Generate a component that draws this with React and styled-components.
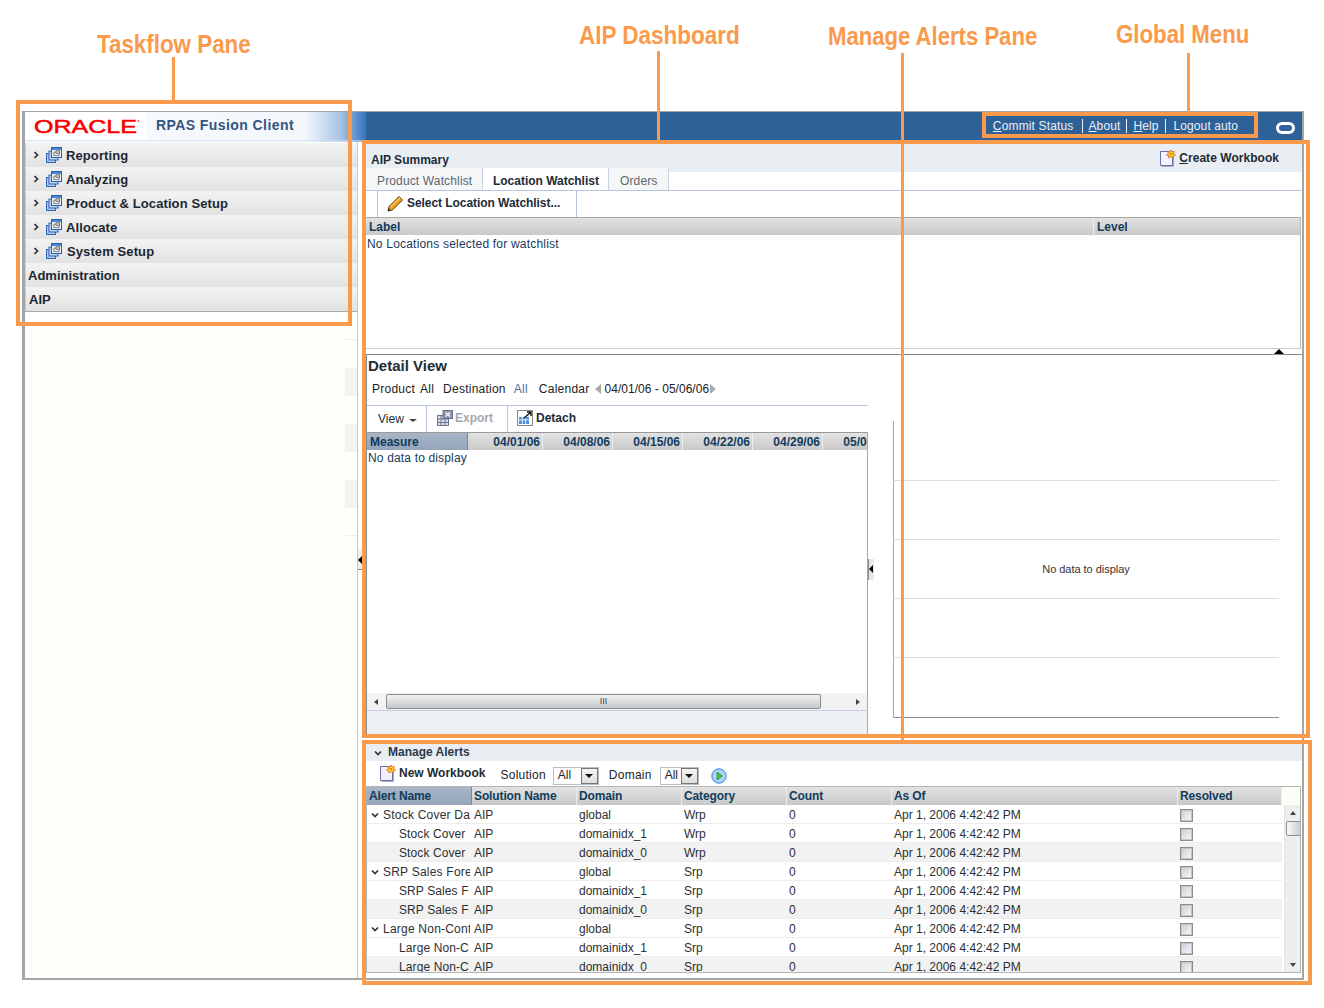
import React from 'react'
import styled, { createGlobalStyle } from 'styled-components'

const ORANGE = '#f99a4c'
const COLS = '105px 105px 105px 105px 105px 286px 104px'

const Global = createGlobalStyle`
  html, body { margin: 0; background: #fff; }
  body { font: 12px/1.2 "Liberation Sans", Arial, sans-serif; color: #222; }
  * { box-sizing: border-box; }
`

const Stage = styled.div`
  position: relative;
  width: 1324px;
  height: 1008px;
  padding: 111px 20px 0 22px;
  overflow: hidden;
`

const AppWindow = styled.div`
  width: 1282px;
  height: 869px;
  border-style: solid;
  border-width: 1px 2px 2px 3px;
  border-color: #9fa3a8 #a5a5a5 #a5a5a5 #a3a5aa;
  display: flex;
  flex-direction: column;
`

const Banner = styled.header`
  height: 30px;
  flex: none;
  display: flex;
  align-items: center;
  background: #2d6197;
`

const Brand = styled.div`
  width: 341px;
  height: 100%;
  flex: none;
  display: flex;
  align-items: center;
  background: linear-gradient(90deg, #fff 0, #fff 121px, #f6f9fd 122px, #f3f7fc 280px, #a9c5e4 315px, #3474bd 341px);
  box-shadow: inset 0 -2px 0 rgba(214, 228, 245, .6);
`

const LogoSvg = styled.svg`
  margin-left: 9px;
  margin-top: -3px;
  width: 106px;
  height: 18px;
  flex: none;
`

const AppName = styled.div`
  margin-left: 16px;
  margin-top: -3px;
  font-size: 14px;
  font-weight: bold;
  letter-spacing: .42px;
  color: #33557f;
`

const GlobalLinks = styled.nav`
  margin-left: auto;
  display: flex;
  align-items: center;
  color: #eaf0f6;
  font-size: 12px;
  margin-top: -3px;
`

const GlobalLink = styled.span`
  padding: 0 ${p => p.$right || 7}px 0 ${p => p.$left || 7}px;
  line-height: 14px;
  border-left: ${p => (p.$first ? 'none' : '1px solid #eef3f8')};
  letter-spacing: ${p => (p.$first ? '.15px' : '.1px')};
  u { text-decoration: underline; }
`

const Ring = styled.span`
  width: 19px;
  height: 12px;
  margin: 1px 7px 0 31px;
  border: 3px solid #fff;
  border-radius: 6px;
  flex: none;
`

const Body = styled.div`
  flex: 1;
  min-height: 0;
  display: flex;
`

const Taskflow = styled.aside`
  width: 333px;
  flex: none;
  display: flex;
  flex-direction: column;
  padding-top: 1px;
  border-right: 1px solid #c9c9c9;
`

const NavRow = styled.div`
  height: 24px;
  flex: none;
  display: flex;
  align-items: center;
  padding: 2px 0 0 ${p => p.$inset || 7}px;
  background: linear-gradient(#f3f3f3, #e2e2e2);
  font-size: 13px;
  font-weight: bold;
  color: #1c2733;
  box-shadow: inset 1px 0 0 #d0d0d0;
`

const NavChevron = styled.span`
  display: flex;
  margin-top: -3px;
`

const NavIcon = styled.span`
  display: flex;
  margin: -2px 0 0 6px;
`

const NavLabel = styled.span`
  margin-left: ${p => p.$gap || 4}px;
  letter-spacing: .1px;
`

const NavFill = styled.div`
  flex: 1;
  border-top: 1px solid #aaa;
  padding-top: 10px;
  background: #fff;
`

const Cream = styled.div`
  height: 100%;
  background:
    linear-gradient(#fff 0 17px, #eee 17px 18px, #fff 18px 46px, #f3f3f3 46px 74px, #fff 74px 102px, #f3f3f3 102px 130px, #fff 130px 158px, #f3f3f3 158px 186px, #fff 186px 213px, #eee 213px 214px) right top / 12px 214px no-repeat,
    #fdfef9;
`

const SplitStrip = styled.div`
  width: 8px;
  flex: none;
  position: relative;
`

const SplitHandle = styled.span`
  position: absolute;
  left: 0;
  top: 407px;
  width: 4px;
  height: 21px;
  background: #eee;
  border-bottom: 1px solid #888;
  &::after {
    content: '';
    position: absolute;
    left: 0;
    top: 7px;
    border: 4px solid transparent;
    border-left-width: 0;
    border-right: 4px solid #000;
  }
`

const Main = styled.main`
  flex: 1;
  min-width: 0;
  display: flex;
  flex-direction: column;
  padding-top: 1px;
`

const SummaryHead = styled.div`
  height: 25px;
  flex: none;
  display: flex;
  align-items: flex-end;
  justify-content: space-between;
  padding: 0 23px 1px 5px;
  background: #e9eef3;
  font-weight: bold;
  color: #222b36;
`

const SummaryAction = styled.span`
  display: flex;
  align-items: center;
  gap: 3px;
  letter-spacing: .04px;
  u { text-decoration: underline; }
`

const Tabs = styled.div`
  height: 23px;
  flex: none;
  display: flex;
  padding-right: 1px;
  border-bottom: 1px solid #b9c5dc;
  background: linear-gradient(#e9eef3 4px, #fff 4px);
`

const Tab = styled.span`
  width: ${p => p.$w}px;
  padding-left: ${p => p.$pad}px;
  line-height: 26px;
  border-right: 1px solid #c9d3e2;
  background: ${p => (p.$active ? '#fff' : '#f5f6f7')};
  color: ${p => (p.$active ? '#222b36' : '#5d6670')};
  font-weight: ${p => (p.$active ? 'bold' : 'normal')};
  letter-spacing: ${p => (p.$active ? '-.02px' : '.14px')};
`

const SubBar = styled.div`
  height: 26px;
  flex: none;
  padding-left: 11px;
  display: flex;
`

const SubButton = styled.span`
  width: 200px;
  display: flex;
  align-items: center;
  gap: 3px;
  padding: 0 0 2px 9px;
  border: solid #b9c5dc;
  border-width: 0 1px;
  font-weight: bold;
  letter-spacing: -.06px;
  color: #222b36;
`

const WatchTable = styled.section`
  height: 132px;
  flex: none;
  margin-right: 1px;
  border: 1px solid #aaa;
  border-width: 1px 1px 1px 0;
  border-color: #a8a8a8 #bbb #ccc #bbb;
  display: flex;
  flex-direction: column;
`

const WatchHead = styled.div`
  height: 17px;
  display: grid;
  grid-template-columns: 727px 1fr;
  background: linear-gradient(#e2e2e2, #c9c9c9);
  font-weight: bold;
  color: #123c5c;
  line-height: 18px;
`

const WatchCell = styled.span`
  padding-left: 3px;
  border-left: ${p => (p.$rule ? '1px solid #eee' : 'none')};
`

const EmptyNote = styled.div`
  padding-left: 1px;
  line-height: 18px;
  color: #203a5a;
  letter-spacing: .2px;
`

const Splitter = styled.div`
  height: 6px;
  flex: none;
  position: relative;
  border-bottom: 1px solid #8a8a8a;
  &::after {
    content: '';
    position: absolute;
    right: 18px;
    top: 0;
    border: 5px solid transparent;
    border-top-width: 0;
    border-bottom: 5px solid #000;
  }
`

const Detail = styled.section`
  height: 380px;
  flex: none;
  display: flex;
  border-left: 1px solid #8a8a8a;
  position: relative;
`

const DetailLeft = styled.div`
  width: 501px;
  flex: none;
  display: flex;
  flex-direction: column;
`

const DetailTitle = styled.h2`
  height: 22px;
  margin: 0;
  padding: 2px 0 0 1px;
  font-size: 15px;
  font-weight: bold;
  color: #222b36;
`

const Filters = styled.div`
  height: 28px;
  display: flex;
  align-items: center;
  padding: 0 0 4px 5px;
  letter-spacing: .24px;
`

const FilterValue = styled.span`
  margin: 0 ${p => p.$after || 10}px 0 ${p => p.$before || 5}px;
  color: ${p => (p.$muted ? '#4f6d98' : '#222')};
`

const DateRange = styled.span`
  letter-spacing: .03px;
`

const Pager = styled.span`
  width: 0;
  height: 0;
  border: 5px solid transparent;
  ${p => (p.$next ? 'border-left: 6px solid #aaa; border-right-width: 0;' : 'border-right: 6px solid #aaa; border-left-width: 0;')}
  margin: ${p => (p.$next ? '0 0 0 1px' : '0 3px 0 6px')};
`

const ViewBar = styled.div`
  height: 27px;
  display: flex;
  border-top: 1px solid #b9c5dc;
`

const ViewItem = styled.span`
  width: ${p => p.$w}px;
  display: flex;
  align-items: center;
  gap: ${p => p.$gap || 3}px;
  padding-left: ${p => p.$pad}px;
  padding-top: ${p => (p.$plain ? 1 : 0)}px;
  padding-bottom: ${p => (p.$plain ? 0 : 2)}px;
  border-right: ${p => (p.$rule ? '1px solid #b9c5dc' : 'none')};
  font-weight: ${p => (p.$plain ? 'normal' : 'bold')};
  color: ${p => (p.$off ? '#a3a7ad' : '#222b36')};
`

const Caret = styled.i`
  width: 0;
  height: 0;
  margin: 2px 0 0 2px;
  border: 3px solid transparent;
  border-top: 3px solid #444;
  border-bottom-width: 0;
  border-left-width: 4px;
  border-right-width: 4px;
`

const MeasureTable = styled.div`
  flex: 1;
  min-height: 0;
  display: flex;
  flex-direction: column;
  border-right: 1px solid #aaa;
  border-top: 1px solid #999;
  overflow: hidden;
`

const MeasureHead = styled.div`
  height: 17px;
  flex: none;
  display: flex;
  font-weight: bold;
  line-height: 18px;
  color: #123c5c;
`

const HeadCell = styled.span`
  flex: none;
  width: ${p => p.$w}px;
  padding: ${p => (p.$date ? '0 2px 0 0' : `0 0 0 ${p.$pad || 3}px`)};
  text-align: ${p => (p.$date ? 'right' : 'left')};
  white-space: nowrap;
  overflow: hidden;
  background: ${p => (p.$sorted ? 'linear-gradient(#a9b6c8, #94a4ba)' : 'linear-gradient(#e2e2e2, #c9c9c9)')};
  border-right: 1px solid ${p => (p.$sorted ? '#7d8796' : '#eee')};
`

const MeasureBody = styled.div`
  flex: 1;
  padding-left: 1px;
  line-height: 17px;
  color: #203a5a;
  letter-spacing: .16px;
`

const HScroll = styled.div`
  height: 17px;
  flex: none;
  display: flex;
  align-items: center;
  padding-left: 7px;
  background: #f2f2f2;
`

const ScrollArrow = styled.i`
  width: 0;
  height: 0;
  flex: none;
  border: 3px solid transparent;
  ${p => p.$dir === 'left' && 'border-right: 4px solid #444; border-left-width: 0;'}
  ${p => p.$dir === 'right' && 'border-left: 4px solid #444; border-right-width: 0;'}
  ${p => p.$dir === 'up' && 'border-bottom: 4px solid #444; border-top-width: 0;'}
  ${p => p.$dir === 'down' && 'border-top: 4px solid #444; border-bottom-width: 0;'}
`

const SelectArrow = styled.i`
  width: 0;
  height: 0;
  border: 4px solid transparent;
  border-top: 4px solid #111;
  border-bottom-width: 0;
`

const HThumb = styled.div`
  width: 435px;
  height: 15px;
  margin: 0 35px 0 8px;
  border: 1px solid #8e8e8e;
  border-radius: 2px;
  background: linear-gradient(#f2f2f2, #c4c8cc);
  color: #444;
  font-size: 9px;
  line-height: 12px;
  text-align: center;
`

const DetailFoot = styled.div`
  height: 25px;
  flex: none;
  background: #edf0f4;
  border-top: 1px solid #c6d0df;
  border-right: 1px solid #aaa;
`

const ChartArea = styled.div`
  width: 411px;
  margin-top: 66px;
  padding-left: 25px;
  height: 297px;
  display: grid;
  grid-template-rows: 60px 59px 59px 59px 60px;
`

const Band = styled.div`
  display: flex;
  align-items: center;
  justify-content: center;
  border-left: 1px solid #a6a6a6;
  border-bottom: 1px solid ${p => (p.$last ? '#8f8f9c' : '#dcdcdc')};
  padding: 1px 1px 0 0;
  font-size: 11px;
  letter-spacing: -.03px;
  color: #333;
`

const ChartHandle = styled.span`
  position: absolute;
  left: 501px;
  top: 204px;
  width: 6px;
  height: 21px;
  background: #e8e8e8;
  border-left: 1px solid #888;
  &::after {
    content: '';
    position: absolute;
    left: 0;
    top: 6px;
    border: 4px solid transparent;
    border-left-width: 0;
    border-right: 4px solid #000;
  }
`

const Gap = styled.div`
  height: 9px;
  flex: none;
`

const AlertsHead = styled.div`
  height: 17px;
  flex: none;
  display: flex;
  align-items: center;
  gap: 6px;
  padding-left: 8px;
  background: #e9eef3;
  font-weight: bold;
  color: #2a3a4c;
`

const AlertsBar = styled.div`
  height: 25px;
  flex: none;
  display: flex;
  align-items: center;
  padding: 4px 0 0 14px;
`

const BarAction = styled.span`
  display: flex;
  align-items: center;
  gap: 3px;
  font-weight: bold;
  color: #222b36;
  margin: -4px 15px 0 0;
`

const BarLabel = styled.span`
  margin-right: ${p => p.$after || 7}px;
  letter-spacing: .25px;
`

const Select = styled.span`
  width: ${p => p.$w}px;
  height: 18px;
  margin-right: ${p => p.$after}px;
  display: flex;
  align-items: center;
  justify-content: space-between;
  padding: 0 0 0 4px;
  border: 1px solid #b8bec7;
  background: #fff;
`

const SelectBtn = styled.span`
  width: 17px;
  height: 16px;
  display: flex;
  align-items: center;
  justify-content: center;
  background: linear-gradient(#f4f4f4, #dedede);
  border: 1px solid #777;
`

const AlertTable = styled.section`
  height: 187px;
  flex: none;
  margin-right: 1px;
  border: 1px solid #b5b5b5;
  display: flex;
  flex-direction: column;
  overflow: hidden;
`

const AlertHeadRow = styled.div`
  height: 18px;
  flex: none;
  display: flex;
  background: #fdfdf8;
`

const AlertHeadCells = styled.div`
  display: grid;
  grid-template-columns: ${COLS};
  font-weight: bold;
  line-height: 18px;
  color: #123c5c;
  letter-spacing: -.12px;
`

const AlertBody = styled.div`
  flex: 1;
  min-height: 0;
  display: flex;
`

const AlertRows = styled.div`
  width: 915px;
  flex: none;
  overflow: hidden;
`

const AlertRow = styled.div`
  height: 19px;
  padding-top: 2px;
  display: grid;
  grid-template-columns: ${COLS};
  align-items: center;
  border-bottom: 1px solid #ededed;
  background: ${p => (p.$shade ? '#f2f2f2' : '#fff')};
  color: #2b2f33;
`

const AlertCell = styled.span`
  padding-left: 2px;
  white-space: nowrap;
  overflow: hidden;
`

const NameCell = styled(AlertCell)`
  display: flex;
  align-items: center;
  padding-left: ${p => (p.$child ? 32 : 4)}px;
  margin-right: ${p => (p.$child ? 3 : 2)}px;
  overflow: hidden;
  letter-spacing: ${p => (p.$child ? '.1px' : '.22px')};
`

const NameText = styled.span`
  margin-left: ${p => (p.$parent ? 4 : 0)}px;
`

const Checkbox = styled.span`
  display: block;
  width: 13px;
  height: 13px;
  border: 1px solid #8c8c8c;
  box-shadow: inset 0 0 0 1px #c4c4c4;
  background: linear-gradient(135deg, #c8cdd6, #fafafa);
`

const VScroll = styled.div`
  width: 17px;
  margin-left: 2px;
  flex: none;
  display: flex;
  flex-direction: column;
  align-items: center;
  padding: 6px 0 5px;
  background: #eee;
  border-left: 1px solid #e4e4e4;
`

const VThumb = styled.span`
  width: 15px;
  height: 15px;
  margin-top: 6px;
  margin-bottom: auto;
  border: 1px solid #8e8e8e;
  border-radius: 2px;
  background: linear-gradient(90deg, #fafafa, #c9ccd1);
`

const Rule = styled.div`
  position: absolute;
  left: ${p => p.$x}px;
  top: ${p => p.$y}px;
  width: 3px;
  height: ${p => p.$h}px;
  background: ${ORANGE};
`

const Callout = styled.div`
  position: absolute;
  left: ${p => p.$x}px;
  top: ${p => p.$y}px;
  width: ${p => p.$w}px;
  height: ${p => p.$h}px;
  border: 4px solid ${ORANGE};
`

const CalloutLabel = styled.div`
  position: absolute;
  left: ${p => p.$x}px;
  top: ${p => p.$y}px;
  font-size: 26px;
  line-height: 30px;
  font-weight: bold;
  white-space: nowrap;
  color: ${ORANGE};
  transform: scaleX(${p => p.$sx});
  transform-origin: left center;
`

const Oracle = () => (
  <LogoSvg viewBox="0 0 106 18">
    <text x="0" y="15.5" fontFamily="Liberation Sans" fontSize="18" fill="#f80000" stroke="#f80000" strokeWidth=".5" textLength="103" lengthAdjust="spacingAndGlyphs">ORACLE</text>
    <circle cx="104.5" cy="4" r=".8" fill="#f80000" />
  </LogoSvg>
)

const Chevron = ({ open, size = 8 }) => (
  <svg width={size} height={size} viewBox="0 0 8 8" style={{ flex: 'none' }}>
    <path d={open ? 'M1 2.5 L4 5.5 L7 2.5' : 'M2.5 1 L5.5 4 L2.5 7'} fill="none" stroke="#333" strokeWidth="1.7" />
  </svg>
)

const StackIcon = () => (
  <svg width="16" height="16" viewBox="0 0 16 16" style={{ flex: 'none' }}>
    <rect x=".5" y="6.5" width="9" height="9" fill="#a9c8ef" stroke="#2f62b8" />
    <rect x="3" y="4" width="9" height="9" fill="#bcd4f2" stroke="#2f62b8" />
    <rect x="5.5" y=".5" width="10" height="10" fill="#e6eefa" stroke="#2f5ca8" />
    <rect x="6" y="1" width="9" height="2" fill="#4f86d4" />
    <rect x="8" y="5.2" width="5" height="3.4" fill="#fff" stroke="#666" strokeWidth=".8" />
    <rect x="10" y="3.8" width="3.6" height="2.6" fill="#ccc" stroke="#666" strokeWidth=".8" />
  </svg>
)

const DocStar = () => (
  <svg width="16" height="17" viewBox="0 0 16 17" style={{ flex: 'none' }}>
    <path d="M.5 1.5 H9 L12.5 5 V15.5 H.5 Z" fill="#f1f2fb" stroke="#6a70a6" />
    <path d="M1.5 16.5 H13.5 V6" fill="none" stroke="#a7adc9" />
    <path d="M11 0 L12 2 L14.4 1.4 L13.6 3.6 L15.5 5 L13.3 5.7 L13.2 8 L11 6.6 L8.8 8 L8.7 5.7 L6.5 5 L8.4 3.6 L7.6 1.4 L10 2 Z" fill="#ffd21f" stroke="#c9572a" strokeWidth=".7" />
    <circle cx="11" cy="4" r="1.1" fill="#e8641f" />
  </svg>
)

const Pencil = () => (
  <svg width="17" height="17" viewBox="0 0 17 17" style={{ flex: 'none' }}>
    <path d="M1 16 L2 11.5 L12 1.5 L15.5 5 L5.5 15 Z" fill="#ee9f1f" stroke="#5f4310" />
    <path d="M3.5 12 L13 3" stroke="#fde59a" />
    <path d="M1 16 L1.6 13.2 L3.8 15.4 Z" fill="#222" />
  </svg>
)

const ExportIcon = () => (
  <svg width="16" height="16" viewBox="0 0 16 16" style={{ flex: 'none' }}>
    <rect x=".5" y="5.5" width="11" height="10" fill="#dfe1ea" stroke="#6c7290" />
    <path d="M.5 9 H11.5 M.5 12.5 H11.5 M4 5.5 V15.5 M8 5.5 V15.5" stroke="#6c7290" />
    <rect x="6" y=".5" width="9.5" height="8" fill="#8c93ad" stroke="#6c7290" />
    <path d="M8.5 2.5 L13 6.5 M13 2.5 L8.5 6.5" stroke="#fff" strokeWidth="1.2" />
  </svg>
)

const DetachIcon = () => (
  <svg width="16" height="16" viewBox="0 0 16 16" style={{ flex: 'none' }}>
    <rect x=".5" y=".5" width="15" height="15" fill="#fff" stroke="#111" strokeDasharray="1 1" />
    <rect x="2" y="7" width="10" height="7" fill="#4e8fdc" />
    <path d="M2 10 H12 M5.3 7 V14 M8.6 7 V14" stroke="#d7e8fb" />
    <path d="M7 8 L13.5 2.5 M10 2 H14 V6" fill="none" stroke="#111" strokeWidth="1.4" />
  </svg>
)

const GoIcon = () => (
  <svg width="16" height="16" viewBox="0 0 16 16" style={{ flex: 'none' }}>
    <circle cx="8" cy="8" r="7.2" fill="#a9d3f5" stroke="#3d83d0" />
    <path d="M6 4 L11.5 8 L6 12 Z" fill="#55b84a" stroke="#2e8a36" strokeWidth=".7" />
  </svg>
)

const navItems = [
  { label: 'Reporting' },
  { label: 'Analyzing' },
  { label: 'Product & Location Setup' },
  { label: 'Allocate' },
  { label: 'System Setup', gap: 5 },
]

const dates = ['04/01/06', '04/08/06', '04/15/06', '04/22/06', '04/29/06', '05/06/06']

const alertHeads = ['Alert Name', 'Solution Name', 'Domain', 'Category', 'Count', 'As Of', 'Resolved']

const families = [
  ['Stock Cover Days', 'Wrp'],
  ['SRP Sales Forecast', 'Srp'],
  ['Large Non-Contiguous', 'Srp'],
]

const alerts = families.flatMap(([name, cat]) => [
  { name, cat, domain: 'global', parent: true },
  { name, cat, domain: 'domainidx_1' },
  { name, cat, domain: 'domainidx_0' },
])

export default function App() {
  return (
    <Stage>
      <Global />
      <AppWindow>
        <Banner>
          <Brand>
            <Oracle />
            <AppName>RPAS Fusion Client</AppName>
          </Brand>
          <GlobalLinks>
            <GlobalLink $first $right={8}><u>C</u>ommit Status</GlobalLink>
            <GlobalLink $left={6} $right={6}><u>A</u>bout</GlobalLink>
            <GlobalLink $left={6}><u>H</u>elp</GlobalLink>
            <GlobalLink>Lo<u>g</u>out auto</GlobalLink>
          </GlobalLinks>
          <Ring />
        </Banner>
        <Body>
          <Taskflow>
            {navItems.map(item => (
              <NavRow key={item.label}>
                <NavChevron><Chevron /></NavChevron>
                <NavIcon><StackIcon /></NavIcon>
                <NavLabel $gap={item.gap}>{item.label}</NavLabel>
              </NavRow>
            ))}
            <NavRow $inset={3}>Administration</NavRow>
            <NavRow $inset={4}>AIP</NavRow>
            <NavFill><Cream /></NavFill>
          </Taskflow>
          <SplitStrip><SplitHandle /></SplitStrip>
          <Main>
            <SummaryHead>
              <span>AIP Summary</span>
              <SummaryAction><DocStar /><span><u>C</u>reate Workbook</span></SummaryAction>
            </SummaryHead>
            <Tabs>
              <Tab $w={117} $pad={11}>Product Watchlist</Tab>
              <Tab $w={126} $pad={10} $active>Location Watchlist</Tab>
              <Tab $w={60} $pad={11}>Orders</Tab>
            </Tabs>
            <SubBar>
              <SubButton><Pencil />Select Location Watchlist...</SubButton>
            </SubBar>
            <WatchTable>
              <WatchHead>
                <WatchCell>Label</WatchCell>
                <WatchCell $rule>Level</WatchCell>
              </WatchHead>
              <EmptyNote>No Locations selected for watchlist</EmptyNote>
            </WatchTable>
            <Splitter />
            <Detail>
              <DetailLeft>
                <DetailTitle>Detail View</DetailTitle>
                <Filters>
                  Product<FilterValue $after={9}>All</FilterValue>
                  Destination<FilterValue $before={8} $after={11} $muted>All</FilterValue>
                  Calendar
                  <Pager /><DateRange>04/01/06 - 05/06/06</DateRange><Pager $next />
                </Filters>
                <ViewBar>
                  <ViewItem $w={60} $pad={11} $rule $plain>View<Caret /></ViewItem>
                  <ViewItem $w={81} $pad={10} $gap={2} $rule $off><ExportIcon />Export</ViewItem>
                  <ViewItem $w={100} $pad={9}><DetachIcon />Detach</ViewItem>
                </ViewBar>
                <MeasureTable>
                  <MeasureHead>
                    <HeadCell $w={101} $sorted>Measure</HeadCell>
                    {dates.map((d, i) => (
                      <HeadCell key={d} $w={i === 0 ? 75 : 70} $date>{d}</HeadCell>
                    ))}
                  </MeasureHead>
                  <MeasureBody>No data to display</MeasureBody>
                  <HScroll>
                    <ScrollArrow $dir="left" />
                    <HThumb>III</HThumb>
                    <ScrollArrow $dir="right" />
                  </HScroll>
                </MeasureTable>
                <DetailFoot />
              </DetailLeft>
              <ChartHandle />
              <ChartArea>
                <Band />
                <Band />
                <Band>No data to display</Band>
                <Band />
                <Band $last />
              </ChartArea>
            </Detail>
            <Gap />
            <AlertsHead><Chevron open />Manage Alerts</AlertsHead>
            <AlertsBar>
              <BarAction><DocStar />New Workbook</BarAction>
              <BarLabel>Solution</BarLabel>
              <Select $w={46} $after={10}>All<SelectBtn><SelectArrow /></SelectBtn></Select>
              <BarLabel $after={8}>Domain</BarLabel>
              <Select $w={39} $after={12}>All<SelectBtn><SelectArrow /></SelectBtn></Select>
              <GoIcon />
            </AlertsBar>
            <AlertTable>
              <AlertHeadRow>
                <AlertHeadCells>
                  {alertHeads.map((h, i) => (
                    <HeadCell key={h} $w={i === 5 ? 286 : i === 6 ? 104 : 105} $pad={2} $sorted={i === 0}>{h}</HeadCell>
                  ))}
                </AlertHeadCells>
              </AlertHeadRow>
              <AlertBody>
                <AlertRows>
                  {alerts.map((a, i) => (
                    <AlertRow key={a.name + a.domain} $shade={i % 3 === 2}>
                      <NameCell $child={!a.parent}>
                        {a.parent && <Chevron open />}
                        <NameText $parent={a.parent}>{a.name}</NameText>
                      </NameCell>
                      <AlertCell>AIP</AlertCell>
                      <AlertCell>{a.domain}</AlertCell>
                      <AlertCell>{a.cat}</AlertCell>
                      <AlertCell>0</AlertCell>
                      <AlertCell>Apr 1, 2006 4:42:42 PM</AlertCell>
                      <AlertCell><Checkbox /></AlertCell>
                    </AlertRow>
                  ))}
                </AlertRows>
                <VScroll>
                  <ScrollArrow $dir="up" />
                  <VThumb />
                  <ScrollArrow $dir="down" />
                </VScroll>
              </AlertBody>
            </AlertTable>
          </Main>
        </Body>
      </AppWindow>

      <CalloutLabel $x={97} $y={29} $sx={0.86}>Taskflow Pane</CalloutLabel>
      <CalloutLabel $x={579} $y={20} $sx={0.865}>AIP Dashboard</CalloutLabel>
      <CalloutLabel $x={828} $y={21} $sx={0.85}>Manage Alerts Pane</CalloutLabel>
      <CalloutLabel $x={1116} $y={19} $sx={0.855}>Global Menu</CalloutLabel>
      <Rule $x={172} $y={57} $h={47} />
      <Rule $x={657} $y={51} $h={90} />
      <Rule $x={901} $y={53} $h={691} />
      <Rule $x={1187} $y={53} $h={60} />
      <Callout $x={16} $y={100} $w={336} $h={226} />
      <Callout $x={982} $y={112} $w={276} $h={26} />
      <Callout $x={362} $y={140} $w={948} $h={598} />
      <Callout $x={362} $y={740} $w={950} $h={245} />
    </Stage>
  )
}
